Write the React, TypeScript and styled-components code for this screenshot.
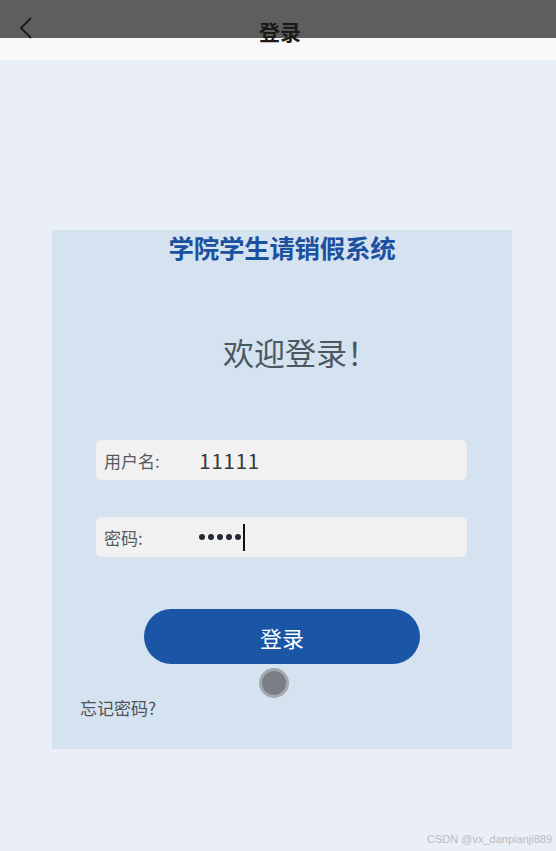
import { FC } from 'react'
import styled, { createGlobalStyle } from 'styled-components'

const GlobalStyle = createGlobalStyle`
  html, body {
    margin: 0;
    padding: 0;
    background: #eaeef6;
    font-family: 'Noto Sans CJK SC', 'Noto Sans', sans-serif;
  }
  #root {
    min-height: 851px;
  }
`

const Page = styled.div`
  width: 556px;
  min-height: 851px;
  position: relative;
  background: #eaeef6;
  display: flex;
  flex-direction: column;
`

const Header = styled.div`
  height: 60px;
  display: flex;
  align-items: flex-start;
  background: linear-gradient(#5e5e5e 0, #5e5e5e 38px, #f8f8f8 38px, #f8f8f8 100%);
`

const BackButton = styled.div`
  width: 20px;
  height: 24px;
  margin: 16px 0 0 18px;
  display: flex;
`

const Title = styled.div`
  flex: 1;
  text-align: center;
  margin: 18px 34px 0 0;
  font-size: 21px;
  line-height: 26px;
  font-weight: 700;
  color: #1a1a1a;
`

const Card = styled.div`
  width: 460px;
  margin: 170px 0 0 52px;
  background: #d5e2ef;
  display: flex;
  flex-direction: column;
  padding-bottom: 31px;
`

const SystemName = styled.div`
  text-align: center;
  font-size: 25.5px;
  line-height: 34px;
  font-weight: 700;
  color: #1c519f;
  letter-spacing: -0.3px;
`

const Welcome = styled.div`
  margin: 66px 0 0 171px;
  font-size: 31px;
  line-height: 44px;
  color: #4a5862;
`

const Field = styled.div<{ $top: number }>`
  margin: ${p => p.$top}px 0 0 44px;
  width: 371px;
  height: 40px;
  border-radius: 6px;
  background: #f1f1f1;
  display: flex;
  align-items: center;
`

const Label = styled.span`
  width: 103px;
  padding-left: 8px;
  box-sizing: border-box;
  font-size: 17px;
  color: #555b60;
`

const Value = styled.span`
  font-size: 21px;
  color: #333a40;
  letter-spacing: 0.5px;
`

const Dots = styled.span`
  display: flex;
  align-items: center;
  gap: 3px;
`

const Dot = styled.span`
  width: 6px;
  height: 6px;
  border-radius: 50%;
  background: #232a33;
`

const Caret = styled.span`
  width: 2px;
  height: 27px;
  margin-left: -1px;
  background: #111;
`

const LoginButton = styled.button`
  margin: 52px 0 0 92px;
  width: 276px;
  height: 55px;
  border: none;
  border-radius: 28px;
  background: #1b55a5;
  color: #fff;
  font-family: inherit;
  font-size: 22px;
  cursor: pointer;
`

const Touch = styled.div`
  margin: 4px 0 0 207px;
  width: 30px;
  height: 30px;
  border-radius: 50%;
  box-sizing: border-box;
  background: #7a7f87;
  border: 3px solid #a4a9b0;
`

const Forgot = styled.div`
  margin: 0 0 0 28px;
  font-size: 17px;
  line-height: 20px;
  color: #4d5459;
`

const Watermark = styled.div`
  position: absolute;
  right: 4px;
  bottom: 6px;
  font-family: 'Liberation Sans', Arial, sans-serif;
  font-size: 11px;
  color: #b8bcc4;
`

const App: FC = () => {
  return (
    <Page>
      <GlobalStyle />
      <Header>
        <BackButton>
          <svg width="20" height="24" viewBox="0 0 20 24">
            <path d="M13 2 L3 12 L13 22" fill="none" stroke="#1a1a1a" strokeWidth="1.8" />
          </svg>
        </BackButton>
        <Title>登录</Title>
      </Header>
      <Card>
        <SystemName>学院学生请销假系统</SystemName>
        <Welcome>欢迎登录！</Welcome>
        <Field $top={66}>
          <Label>用户名:</Label>
          <Value>11111</Value>
        </Field>
        <Field $top={37}>
          <Label>密码:</Label>
          <Dots>
            {[0, 1, 2, 3, 4].map(i => (
              <Dot key={i} />
            ))}
            <Caret />
          </Dots>
        </Field>
        <LoginButton>登录</LoginButton>
        <Touch />
        <Forgot>忘记密码?</Forgot>
      </Card>
      <Watermark>CSDN @vx_danpianji889</Watermark>
    </Page>
  )
}

export default App
